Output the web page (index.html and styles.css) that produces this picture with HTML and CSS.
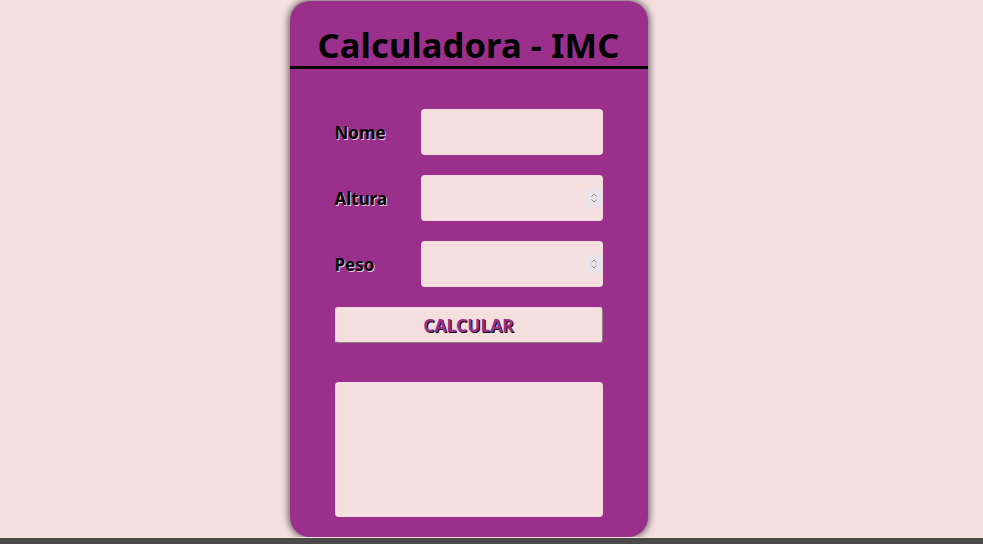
FILE: index.html
```html
<!DOCTYPE html>
<html lang="pt">
<head>
<meta charset="utf-8">
<title>Calculadora - IMC</title>
<link rel="stylesheet" href="styles.css">
</head>
<body>
<main class="card">
  <h1 class="title">Calculadora - IMC</h1>
  <form class="form">
    <label class="row">
      <span class="label">Nome</span>
      <span class="field"><input class="input" type="text"></span>
    </label>
    <label class="row">
      <span class="label">Altura</span>
      <span class="field"><input class="input" type="number"><span class="spin"><svg width="8" height="12" viewBox="0 0 8 12"><path d="M1.5 4.5 4 2 6.5 4.5M1.5 7.5 4 10 6.5 7.5" fill="none" stroke="#8a8a8f" stroke-width="1"/></svg></span></span>
    </label>
    <label class="row">
      <span class="label">Peso</span>
      <span class="field"><input class="input" type="number"><span class="spin"><svg width="8" height="12" viewBox="0 0 8 12"><path d="M1.5 4.5 4 2 6.5 4.5M1.5 7.5 4 10 6.5 7.5" fill="none" stroke="#8a8a8f" stroke-width="1"/></svg></span></span>
    </label>
    <button class="btn" type="button">CALCULAR</button>
    <div class="result"></div>
  </form>
</main>
<div class="hbar"></div>
</body>
</html>
```
FILE: styles.css
```css
html, body {
  margin: 0;
  padding: 0;
  background: #f4dede;
  font-family: "Noto Sans", "Open Sans", sans-serif;
  overflow: hidden;
}
.card {
  width: 358px;
  height: 536px;
  margin: 1px auto 0;
  background: #9b308c;
  border-radius: 20px;
  box-shadow: 0 0 6px 2px rgba(0, 0, 0, 0.5);
  display: flex;
  flex-direction: column;
  box-sizing: border-box;
  position: relative;
  left: -23px;
}
.title {
  margin: 0;
  padding-top: 26px;
  height: 68px;
  box-sizing: border-box;
  border-bottom: 3px solid #000;
  text-align: center;
  font-size: 34.5px;
  line-height: 36px;
  font-weight: 700;
  color: #000;
  letter-spacing: 0.1px;
}
.form {
  display: flex;
  flex-direction: column;
  padding: 40px 45px 20px;
  gap: 20px;
}
.row {
  display: grid;
  grid-template-columns: 86px 182px;
  align-items: center;
  height: 46px;
}
.label {
  font-size: 17px;
  font-weight: 700;
  color: #000;
  text-shadow: 1px 1px 0 #e8c8e0;
}
.field {
  position: relative;
  display: block;
  height: 46px;
}
.input {
  display: block;
  width: 100%;
  height: 100%;
  box-sizing: border-box;
  border: none;
  border-radius: 4px;
  background: #f4dede;
  outline: none;
  -moz-appearance: textfield;
}
.input::-webkit-inner-spin-button,
.input::-webkit-outer-spin-button {
  -webkit-appearance: none;
  margin: 0;
}
.spin {
  position: absolute;
  right: 1px;
  top: 14px;
  width: 16px;
  height: 18px;
  background: #e9e3ea;
  display: flex;
  align-items: center;
  justify-content: center;
}
.btn {
  height: 36px;
  background: #f4dede;
  border: 1px solid;
  border-color: #f4dede #8a7f86 #8a7f86 #f4dede;
  border-radius: 3px;
  font-family: inherit;
  font-size: 17.5px;
  font-weight: 700;
  color: #9b308c;
  text-shadow: 1px 1px 0 #000;
  padding: 0;
}
.result {
  margin-top: 19px;
  height: 135px;
  background: #f4dede;
  border-radius: 4px;
}
.hbar {
  position: fixed;
  left: 0;
  right: 0;
  bottom: 0;
  height: 6px;
  background: #4a4a4a;
}
```
